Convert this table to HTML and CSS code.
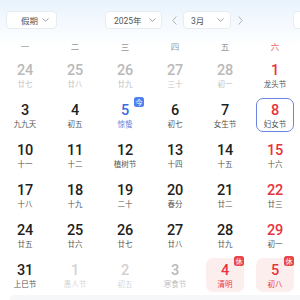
FILE: index.html
```html
<!DOCTYPE html>
<html lang="zh-CN">
<head>
<meta charset="utf-8">
<link rel="stylesheet" href="styles.css">
</head>
<body>
<div class="cal">
  <div class="toolbar">
    <div class="select sel-holiday"><span>假期</span><svg class="chev" width="7" height="4" viewBox="0 0 7 4"><path d="M0.5 0.5 L3.5 3.3 L6.5 0.5" fill="none" stroke="#999" stroke-width="0.9"/></svg></div>
    <div class="select sel-year"><span>2025年</span><svg class="chev" width="7" height="4" viewBox="0 0 7 4"><path d="M0.5 0.5 L3.5 3.3 L6.5 0.5" fill="none" stroke="#999" stroke-width="0.9"/></svg></div>
    <div class="arrow prev"><svg width="5" height="9" viewBox="0 0 5 9"><path d="M4.3 0.5 L0.8 4.5 L4.3 8.5" fill="none" stroke="#aaa" stroke-width="0.9"/></svg></div>
    <div class="select sel-month"><span>3月</span><svg class="chev" width="7" height="4" viewBox="0 0 7 4"><path d="M0.5 0.5 L3.5 3.3 L6.5 0.5" fill="none" stroke="#999" stroke-width="0.9"/></svg></div>
    <div class="arrow next"><svg width="5" height="9" viewBox="0 0 5 9"><path d="M0.7 0.5 L4.2 4.5 L0.7 8.5" fill="none" stroke="#aaa" stroke-width="0.9"/></svg></div>
    <div class="select sel-today"><span>返回今天</span></div>
  </div>
  <div class="weekdays">
    <span>一</span><span>二</span><span>三</span><span>四</span><span>五</span><span class="wk-red">六</span><span class="wk-red">日</span>
  </div>
  <div class="grid">
    <div class="day other"><div class="box"><b>24</b><i>廿七</i></div></div>
    <div class="day other"><div class="box"><b>25</b><i>廿八</i></div></div>
    <div class="day other"><div class="box"><b>26</b><i>廿九</i></div></div>
    <div class="day other"><div class="box"><b>27</b><i>三十</i></div></div>
    <div class="day other"><div class="box"><b>28</b><i>初一</i></div></div>
    <div class="day red"><div class="box"><b>1</b><i>龙头节</i></div></div>
    <div class="day red"><div class="box"><b>2</b><i>初三</i></div></div>

    <div class="day"><div class="box"><b>3</b><i>九九天</i></div></div>
    <div class="day"><div class="box"><b>4</b><i>初五</i></div></div>
    <div class="day today"><div class="box"><b>5</b><i>惊蛰</i><em class="badge badge-blue">今</em></div></div>
    <div class="day"><div class="box"><b>6</b><i>初七</i></div></div>
    <div class="day"><div class="box"><b>7</b><i>女生节</i></div></div>
    <div class="day red selected"><div class="box"><b>8</b><i>妇女节</i></div></div>
    <div class="day red"><div class="box"><b>9</b><i>初十</i></div></div>

    <div class="day"><div class="box"><b>10</b><i>十一</i></div></div>
    <div class="day"><div class="box"><b>11</b><i>十二</i></div></div>
    <div class="day"><div class="box"><b>12</b><i>植树节</i></div></div>
    <div class="day"><div class="box"><b>13</b><i>十四</i></div></div>
    <div class="day"><div class="box"><b>14</b><i>十五</i></div></div>
    <div class="day red"><div class="box"><b>15</b><i>十六</i></div></div>
    <div class="day red"><div class="box"><b>16</b><i>十七</i></div></div>

    <div class="day"><div class="box"><b>17</b><i>十八</i></div></div>
    <div class="day"><div class="box"><b>18</b><i>十九</i></div></div>
    <div class="day"><div class="box"><b>19</b><i>二十</i></div></div>
    <div class="day"><div class="box"><b>20</b><i>春分</i></div></div>
    <div class="day"><div class="box"><b>21</b><i>廿二</i></div></div>
    <div class="day red"><div class="box"><b>22</b><i>廿三</i></div></div>
    <div class="day red"><div class="box"><b>23</b><i>廿四</i></div></div>

    <div class="day"><div class="box"><b>24</b><i>廿五</i></div></div>
    <div class="day"><div class="box"><b>25</b><i>廿六</i></div></div>
    <div class="day"><div class="box"><b>26</b><i>廿七</i></div></div>
    <div class="day"><div class="box"><b>27</b><i>廿八</i></div></div>
    <div class="day"><div class="box"><b>28</b><i>廿九</i></div></div>
    <div class="day red"><div class="box"><b>29</b><i>初一</i></div></div>
    <div class="day red"><div class="box"><b>30</b><i>初二</i></div></div>

    <div class="day"><div class="box"><b>31</b><i>上巳节</i></div></div>
    <div class="day faint"><div class="box"><b>1</b><i>愚人节</i></div></div>
    <div class="day faint"><div class="box"><b>2</b><i>初五</i></div></div>
    <div class="day other"><div class="box"><b>3</b><i>寒食节</i></div></div>
    <div class="day holiday"><div class="box"><b>4</b><i>清明</i><em class="badge badge-red">休</em></div></div>
    <div class="day holiday"><div class="box"><b>5</b><i>初八</i><em class="badge badge-red">休</em></div></div>
    <div class="day holiday"><div class="box"><b>6</b><i>初九</i><em class="badge badge-red">休</em></div></div>
  </div>
  <div class="footer"></div>
</div>
</body>
</html>
```

FILE: styles.css
```css
html, body {
  margin: 0;
  padding: 0;
  overflow: hidden;
  background: #fff;
}
body {
  font-family: Roboto, "Noto Sans CJK SC", sans-serif;
}
.cal {
  width: 350px;
  background: linear-gradient(180deg, #e8f3fd 0, #f4f9fe 22px, #ffffff 46px);
}
.toolbar {
  display: flex;
  align-items: center;
  height: 18px;
  padding: 11px 0 0 6px;
}
.select {
  box-sizing: border-box;
  height: 18px;
  background: #fff;
  border: 1px solid #e7ecf2;
  border-radius: 4px;
  display: flex;
  align-items: center;
  justify-content: space-between;
  font-family: "Noto Sans CJK SC", sans-serif;
  font-size: 8.5px;
  color: #555;
  flex: none;
}
.sel-holiday { width: 51px; padding: 0 7px 0 14px; }
.sel-year { width: 57px; margin-left: 48px; padding: 0 5px 0 8px; font-family: Roboto, "Noto Sans CJK SC", sans-serif; }
.sel-month { width: 48px; margin-left: 5px; padding: 0 6px 0 7px; font-family: Roboto, "Noto Sans CJK SC", sans-serif; }
.sel-today { width: 56px; margin-left: 49px; padding: 0 8px; }
.chev { display: block; }
.arrow {
  width: 8px;
  height: 18px;
  display: flex;
  align-items: center;
  justify-content: center;
  flex: none;
}
.prev { margin-left: 8px; }
.next { margin-left: 5px; }

.weekdays {
  display: grid;
  grid-template-columns: repeat(7, 50px);
  height: 20px;
  margin-top: 7px;
  line-height: 20px;
  text-align: center;
  font-family: "Noto Sans CJK SC", sans-serif;
  font-size: 8.5px;
  color: #9a9a9a;
}
.wk-red { color: #e8666c; }

.grid {
  display: grid;
  grid-template-columns: repeat(7, 50px);
  grid-auto-rows: 40px;
}
.day {
  display: flex;
  justify-content: center;
  align-items: flex-start;
}
.box {
  position: relative;
  box-sizing: border-box;
  width: 38px;
  height: 34px;
  margin-top: 2px;
  padding-top: 5px;
  border-radius: 7px;
  display: flex;
  flex-direction: column;
  align-items: center;
}
.box b {
  display: block;
  font-family: Roboto, sans-serif;
  font-weight: 500;
  font-size: 14.5px;
  line-height: 16px;
  letter-spacing: -0.2px;
  color: #1f1f1f;
}
.box i {
  display: block;
  font-style: normal;
  font-family: "Noto Sans CJK SC", sans-serif;
  font-size: 7.5px;
  line-height: 10px;
  color: #555;
}
.other b { color: #b9b9b9; }
.other i { color: #c2c2c2; }
.faint b { color: #d2d2d2; }
.faint i { color: #d6d6d6; }
.red b { color: #e8343c; }
.today b { color: #3b6be3; }
.today i { color: #5b80e0; }
.selected .box {
  border: 1.5px solid #6a86e2;
  padding-top: 3.5px;
}
.holiday .box { background: #fdeeee; }
.holiday b { color: #e8343c; }
.holiday i { color: #e8343c; }
.badge {
  position: absolute;
  top: -2px;
  right: 0;
  width: 10px;
  height: 10px;
  border-radius: 2.5px;
  font-style: normal;
  font-family: "Noto Sans CJK SC", sans-serif;
  font-size: 7px;
  line-height: 10px;
  text-align: center;
  color: #fff;
}
.badge-blue { background: #4d7ff0; top: -1px; right: 0; }
.badge-red { background: #e8454a; }
.footer {
  height: 20px;
  margin-left: 9px;
  margin-top: -1px;
  background: #f6f7f9;
  border-radius: 6px 0 0 0;
}
```
